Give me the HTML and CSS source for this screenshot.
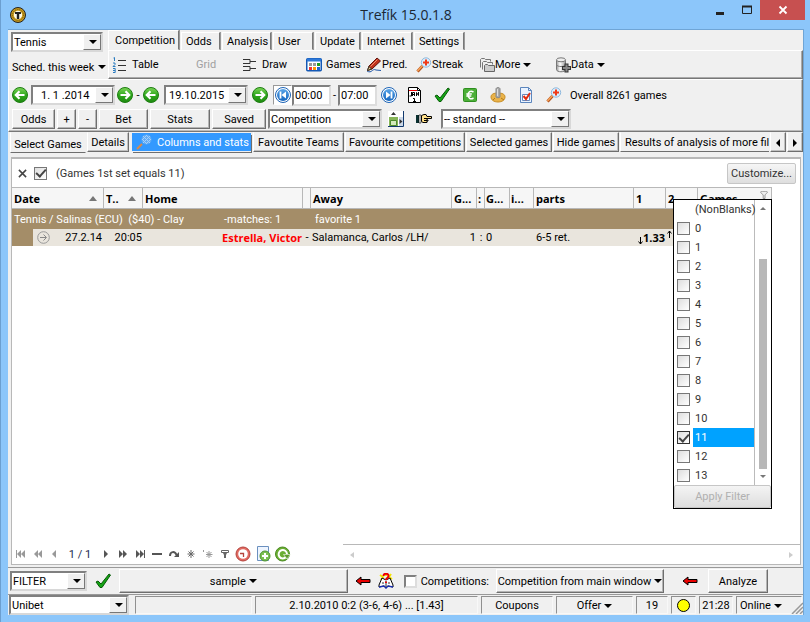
FILE: index.html
```html
<!DOCTYPE html>
<html lang="en">
<head>
<meta charset="utf-8">
<title>Trefík 15.0.1.8</title>
<link rel="stylesheet" href="styles.css">
</head>
<body>
<svg class="defs" aria-hidden="true">
  <defs>
    <linearGradient id="gGreen" x1="0" y1="0" x2="0" y2="1"><stop offset="0" stop-color="#7fd65a"/><stop offset=".5" stop-color="#2ea81c"/><stop offset="1" stop-color="#1f8a10"/></linearGradient>
    <linearGradient id="gBlue" x1="0" y1="0" x2="0" y2="1"><stop offset="0" stop-color="#5aa5e8"/><stop offset="1" stop-color="#1466c0"/></linearGradient>
    <linearGradient id="gGrey" x1="0" y1="0" x2="1" y2="0"><stop offset="0" stop-color="#999"/><stop offset=".4" stop-color="#fff"/><stop offset="1" stop-color="#999"/></linearGradient>
  </defs>
  <symbol id="go" viewBox="0 0 16 16"><circle cx="8" cy="8" r="7.5" fill="url(#gGreen)" stroke="#1d7d12"/><path d="M3.5 8h8M8.500 4.300L12.200 8l-3.700 3.700" fill="none" stroke="#fff" stroke-width="2.200"/></symbol>
  <symbol id="skip" viewBox="0 0 16 16"><circle cx="8" cy="8" r="7.500" fill="#fff" stroke="#1c63b5"/><circle cx="8" cy="8" r="6" fill="url(#gBlue)"/><path d="M5 4.500L9.500 8 5 11.500z" fill="#fff"/><path d="M10.500 4.500v7" stroke="#fff" stroke-width="1.800"/></symbol>
  <symbol id="check" viewBox="0 0 16 16"><path d="M1 9l2-1 3 3L14 1l1.500 1L7 14.500H5z" fill="#16a516" stroke="#075a07"/></symbol>
  <symbol id="lens" viewBox="0 0 16 16"><path d="M1.500 14.500L6.500 9" stroke="#b5521a" stroke-width="3"/><path d="M1.500 14L6.500 8.500" stroke="#f5a35a" stroke-width="1.500"/><circle cx="10" cy="5.500" r="4.700" fill="#d9efff" stroke="#8fb8dc"/><path d="M10 2.500v6M7 5.500h6" stroke="#f03a18" stroke-width="2"/></symbol>
  <symbol id="redarrow" viewBox="0 0 16 10"><path d="M1 5l5-4v2.500h9v3H6V9z" fill="#e80000" stroke="#000"/></symbol>
</svg>

<div class="window">
  <header class="titlebar">
    <svg class="app-icon" viewBox="0 0 16 16"><circle cx="8" cy="8" r="7.500" fill="#c79a1e" stroke="#222"/><circle cx="8" cy="8" r="5.500" fill="none" stroke="#6d520a" stroke-dasharray="1 1"/><circle cx="8" cy="8" r="4.200" fill="#fffbe8"/><path d="M5 5h6v2H9.200v5H6.800V7H5z" fill="#222"/></svg>
    <h1>Trefík 15.0.1.8</h1>
    <div class="window-buttons">
      <button aria-label="Minimize"><svg viewBox="0 0 10 10"><path d="M1 8.500h8" stroke="#222" stroke-width="3"/></svg></button>
      <button aria-label="Maximize"><svg viewBox="0 0 10 10"><path d="M0 1.500h10" stroke="#222" stroke-width="2"/><path d="M.5 1v7.500h9V1" fill="none" stroke="#222"/></svg></button>
      <button class="close" aria-label="Close"><svg viewBox="0 0 10 10"><path d="M1.500 1.500l7 7m0-7l-7 7" stroke="#fff" stroke-width="1.800"/></svg></button>
    </div>
  </header>

  <main class="client">
    <section class="top">
      <div class="sport">
        <span class="combo"><select aria-label="Sport"><option>Tennis</option></select></span>
        <button class="flat">Sched. this week<i class="caret"></i></button>
      </div>
      <div class="menu">
        <nav class="menu-tabs">
          <button class="on t-competition">Competition</button><button class="t-odds">Odds</button><button class="t-analysis">Analysis</button><button class="t-user">User</button><button class="t-update">Update</button><button class="t-internet">Internet</button><button class="t-settings">Settings</button>
        </nav>
        <div class="menu-bar">
          <button class="flat m-table"><svg class="i16" viewBox="0 0 16 16"><g fill="none" stroke="#2b7cc0"><path d="M1.500 1l1-.5V4M1 6h2v1.500L1 9.500h2.500M1 11.500h2.200v4H1m0-2h2"/></g><path d="M6 3.500h8M6 8.500h8M6 13.500h8" stroke="#333"/></svg>Table</button>
          <button class="flat m-grid" disabled>Grid</button>
          <button class="flat m-draw"><svg class="i16" viewBox="0 0 16 16"><path d="M1 2.500h7v4H1M8 4.500h6M1 9.500h7v4H1M8 11.500h6" fill="none" stroke="#333"/></svg>Draw</button>
          <button class="flat m-games"><svg class="i16" viewBox="0 0 16 16"><rect x=".75" y="1.750" width="14.500" height="12" rx="1" fill="#fff" stroke="#1459b5" stroke-width="1.500"/><path d="M1 3h14" stroke="#2d78d8" stroke-width="3"/><path d="M3 6h3v3H3zM7 6h3v3H7z" fill="#999"/><path d="M11 6h3v3h-3z" fill="#20a020"/><path d="M3 10h3v3H3z" fill="#e33"/><path d="M7 10h3v3H7z" fill="#f90"/><path d="M11 10h3v3h-3z" fill="#26c"/></svg>Games</button>
          <button class="flat tight m-pred"><svg class="i16" viewBox="0 0 16 16"><path d="M1 14c5 3 5-3 9-1l5 .5" fill="none" stroke="#2459a8"/><path d="M1.500 13.500L3 9l8-8 3.500 3-8.500 8z" fill="#c0301c" stroke="#5f130c"/><path d="M4.500 9.500l7-7" stroke="#f09070"/><path d="M1.500 13.500L3 9.500l2.500 2.500z" fill="#f1d09a" stroke="#332"/></svg>Pred.</button>
          <button class="flat tight m-streak"><svg class="i16"><use href="#lens"/></svg>Streak</button>
          <button class="flat tight m-more"><svg class="i16" viewBox="0 0 16 16"><path d="M1.500 10.500v-8l1-1h3l1 1h5v2" fill="#eee" stroke="#777"/><path d="M3.500 12.500v-7l1-1h3l1 1h5v2" fill="#eee" stroke="#777"/><path d="M5.500 14.500v-6l1-1h2l1 1h6v6z" fill="#ccc" stroke="#666"/></svg>More<i class="caret"></i></button>
          <button class="flat tight m-data"><svg class="i16" viewBox="0 0 16 16"><path d="M1.500 3v9.500c0 3 9 3 9 0V3" fill="url(#gGrey)" stroke="#777"/><ellipse cx="6" cy="2.800" rx="4.500" ry="2" fill="#eee" stroke="#777"/><path d="M1.500 8c1 2 8 2 9 0" fill="none" stroke="#777"/><path d="M11.500 6.500v9M7 11h9" stroke="#333" stroke-width="4"/><path d="M11.500 7.500v7M8 11h7" stroke="#888" stroke-width="2"/></svg>Data<i class="caret"></i></button>
        </div>
      </div>
    </section>

    <section class="filters">
      <div class="line dates">
        <button class="icon" aria-label="Previous start"><svg class="i16 flip"><use href="#go"/></svg></button>
        <span class="combo date"><input aria-label="From" value="1. 1 .2014"></span>
        <button class="icon" aria-label="Next start"><svg class="i16"><use href="#go"/></svg></button>
        <span class="dash">-</span>
        <button class="icon" aria-label="Previous end"><svg class="i16 flip"><use href="#go"/></svg></button>
        <span class="combo date date-to"><input aria-label="To" value="19.10.2015"></span>
        <button class="icon" aria-label="Next end"><svg class="i16"><use href="#go"/></svg></button>
        <button class="icon pressed" aria-label="Reset start time"><svg class="i16 flip"><use href="#skip"/></svg></button>
        <input class="time" aria-label="Start time" value="00:00">
        <span class="dash narrow">-</span>
        <input class="time" aria-label="End time" value="07:00">
        <button class="icon" aria-label="Last time"><svg class="i16"><use href="#skip"/></svg></button>
        <div class="tools">
          <button class="icon" aria-label="Calendar"><svg class="i16" viewBox="0 0 16 16"><path d="M2.500.5h9l3 3v12h-12z" fill="#fff" stroke="#000"/><path d="M11.500.5v3h3" fill="none" stroke="#000"/><path d="M3 3.500h8" stroke="#e00"/><path d="M5.500 5v4h-2M6.500 9V5.500h2V9M6.500 7.500h2M10.500 9V5.500l2 3V5" fill="none" stroke="#000"/><path d="M7 11.500h1.500V15M7 14.500h3" fill="none" stroke="#000"/></svg></button>
          <button class="icon" aria-label="Confirm"><svg class="i16"><use href="#check"/></svg></button>
          <button class="icon" aria-label="Currency"><svg class="i16" viewBox="0 0 16 16"><rect x="1.500" y="1.500" width="13" height="13" rx="1" fill="#4caf38" stroke="#2f8f20"/><path d="M11.500 5.200c-3-2.500-5.500 0-5.500 2.800s2.500 5.200 5.500 2.800M4.300 7h5.500M4.300 9h5" fill="none" stroke="#fff" stroke-width="1.500"/></svg></button>
          <button class="icon" aria-label="Joystick"><svg class="i16" viewBox="0 0 16 16"><path d="M1 10c0-3 3-4 7-4s7 1 7 4-3 5-7 5-7-2-7-5z" fill="#eab34a" stroke="#c88f28"/><path d="M3 13l2-2m6 0l3 2" stroke="#b57a18"/><path d="M6 2c0-2 4-2 4 0v8c0 1-4 1-4 0z" fill="#aaa" stroke="#888"/><path d="M7.500 2v7" stroke="#ddd"/></svg></button>
          <button class="icon" aria-label="Checklist"><svg class="i16" viewBox="0 0 16 16"><path d="M2.500.5h8l3 3v12h-11z" fill="#eaf3ff" stroke="#5c86bd"/><path d="M10.500.5v3h3" fill="none" stroke="#5c86bd"/><path d="M4.500 7.500h7v6h-7z" fill="#fff" stroke="#6688bb"/><path d="M5.500 9l2.500 3 4-6" fill="none" stroke="#e22c10" stroke-width="2"/></svg></button>
          <button class="icon" aria-label="Zoom"><svg class="i16"><use href="#lens"/></svg></button>
        </div>
        <span class="total">Overall 8261 games</span>
      </div>
      <div class="line actions">
        <button class="btn w-43">Odds</button><button class="btn w-19">+</button><button class="btn w-19">-</button><button class="btn w-49">Bet</button><button class="btn w-60">Stats</button><button class="btn w-54">Saved</button>
        <span class="combo scope"><select aria-label="Scope"><option>Competition</option></select></span>
        <button class="icon panel-icon" aria-label="Layout"><svg class="i16" viewBox="0 0 16 16"><path d="M0 0h16v16H0z" fill="#fff"/><path d="M15.500 0v15.500H0" fill="none" stroke="#123a6e"/><path d="M1 6h9v9H1z" fill="#86b558"/><path d="M2.500 9.500h6v5h-6z" fill="#d4eabc" stroke="#4f8a2e"/><path d="M11 6h4v9h-4z" fill="#cdd9e8"/><path d="M3 4l2.500-3L8 4zM11.500 8l3 2.500-3 2.500z" fill="#333"/></svg></button>
        <button class="icon" aria-label="Show"><svg class="i16" viewBox="0 0 16 16"><path d="M0 4h3v8H0z" fill="#0a3030"/><path d="M3 4h2v8H3z" fill="#fff" stroke="#000" stroke-width=".6"/><path d="M5.500 4.500L8 3.500h2l1 2h4.500v2H11v1.500h1v1h-1v1.500H7l-1.500-1z" fill="#ffe08a" stroke="#000"/><path d="M8 7.500h3M8 9.500h3" stroke="#000"/></svg></button>
        <span class="combo preset"><select aria-label="Preset"><option>-- standard --</option></select></span>
      </div>
    </section>

    <nav class="views">
      <button class="on">Select Games</button>
      <button class="w-42">Details</button>
      <button class="hot"><svg class="i16" viewBox="0 0 16 16"><path d="M1 15l5-5" stroke="#d98b4a" stroke-width="2"/><circle cx="10.500" cy="5.500" r="5" fill="#62acf5"/><path d="M7 2l7 7M6 5l5 5M10 1l5 5M14 2l-7 7M15 5l-5 5M11 1L6 6" stroke="#a6d0fa"/></svg>Columns and stats</button>
      <button class="w-91">Favoutite Teams</button>
      <button class="w-120">Favourite competitions</button>
      <button class="w-86">Selected games</button>
      <button class="w-66">Hide games</button>
      <button class="last">Results of analysis of more filters</button>
      <button class="scroll" aria-label="Scroll left"><i class="tri left"></i></button>
      <button class="scroll" aria-label="Scroll right"><i class="tri right"></i></button>
    </nav>

    <section class="grid">
      <div class="grid-filter">
        <button class="icon clear" aria-label="Clear filter"><svg viewBox="0 0 10 10"><path d="M1 1l8 8m0-8L1 9" stroke="#444" stroke-width="1.700"/></svg></button>
        <input type="checkbox" id="useFilter" class="tick" checked>
        <label for="useFilter">(Games 1st set equals 11)</label>
        <button class="customize">Customize...</button>
      </div>
      <table>
        <colgroup><col class="c-indent"><col class="c-date"><col class="c-time"><col class="c-home"><col class="c-dash"><col class="c-away"><col class="c-g"><col class="c-colon"><col class="c-g2"><col class="c-info"><col class="c-parts"><col class="c-odd"><col class="c-odd"><col class="c-games"></colgroup>
        <thead>
          <tr>
            <th colspan="2"><span class="sorted">Date<i class="tri up"></i></span></th>
            <th><span class="sorted">T..<i class="tri up"></i></span></th>
            <th>Home</th><th></th><th>Away</th><th>G...</th><th class="nopad">:</th><th class="nopad">G...</th><th class="nopad">i...</th><th>parts</th><th>1</th><th>2</th>
            <th class="anchor">Games<svg class="funnel" viewBox="0 0 8 8"><path d="M.5 1c0-1 7-1 7 0S5 3.500 5 4v3.500H3.200V4C3.200 3.500.5 2 .5 1z" fill="#eee" stroke="#999"/></svg>
              <div class="popup">
                <div class="popup-body">
                  <div class="options">
                    <label class="blank">(NonBlanks)</label>
                    <label><input type="checkbox" class="tick"><span>0</span></label>
                    <label><input type="checkbox" class="tick"><span>1</span></label>
                    <label><input type="checkbox" class="tick"><span>2</span></label>
                    <label><input type="checkbox" class="tick"><span>3</span></label>
                    <label><input type="checkbox" class="tick"><span>4</span></label>
                    <label><input type="checkbox" class="tick"><span>5</span></label>
                    <label><input type="checkbox" class="tick"><span>6</span></label>
                    <label><input type="checkbox" class="tick"><span>7</span></label>
                    <label><input type="checkbox" class="tick"><span>8</span></label>
                    <label><input type="checkbox" class="tick"><span>9</span></label>
                    <label><input type="checkbox" class="tick"><span>10</span></label>
                    <label class="selected"><input type="checkbox" class="tick" checked><span>11</span></label>
                    <label><input type="checkbox" class="tick"><span>12</span></label>
                    <label><input type="checkbox" class="tick"><span>13</span></label>
                  </div>
                  <div class="bar"><i class="tri up small"></i><div class="thumb"></div><i class="tri down small"></i></div>
                </div>
                <button class="apply" disabled>Apply Filter</button>
              </div>
            </th>
          </tr>
        </thead>
        <tbody>
          <tr class="group"><td colspan="14"><div class="group-line"><span>Tennis / Salinas (ECU)  ($40) - Clay</span><span>-matches: 1</span><span>favorite 1</span></div></td></tr>
          <tr class="match">
            <td class="indent"></td>
            <td><span class="match-date"><svg viewBox="0 0 13 13"><circle cx="6.500" cy="6.500" r="5.800" fill="none" stroke="#999"/><path d="M3 6.500h6M6.500 3.500l3 3-3 3" fill="none" stroke="#888"/></svg>27.2.14</span></td>
            <td class="r">20:05</td><td class="r winner">Estrella, Victor</td><td class="mid">-</td><td class="nopad">Salamanca, Carlos /LH/</td><td class="r">1</td><td class="mid">:</td><td class="nopad">0</td><td></td><td>6-5 ret.</td>
            <td class="r odd"><svg viewBox="0 0 5 8"><path d="M2.500 0v7M.5 4.500l2 2.500 2-2.500" fill="none" stroke="#000"/></svg>1.33</td>
            <td class="nopad rise"><svg viewBox="0 0 5 8"><path d="M2.500 8V1M.5 3.500l2-2.500 2 2.500" fill="none" stroke="#000"/></svg></td><td></td>
          </tr>
        </tbody>
      </table>
      <div class="space"></div>
      <footer class="pager">
        <div class="nav">
          <button aria-label="First" disabled><svg viewBox="0 0 10 8"><path d="M.5 0v8" stroke="#999"/><path d="M5 0v8L1 4zM9 0v8L5 4z" fill="#999"/></svg></button>
          <button aria-label="Page back" disabled><svg viewBox="0 0 10 8"><path d="M5 0v8L1 4zM9 0v8L5 4z" fill="#999"/></svg></button>
          <button aria-label="Back" disabled><svg viewBox="0 0 10 8"><path d="M6 0v8L2 4z" fill="#999"/></svg></button>
          <span>1 / 1</span>
          <button aria-label="Next"><svg viewBox="0 0 10 8"><path d="M3 0v8l4-4z" fill="#555"/></svg></button>
          <button aria-label="Page next"><svg viewBox="0 0 10 8"><path d="M1 0v8l4-4zM5 0v8l4-4z" fill="#555"/></svg></button>
          <button aria-label="Last"><svg viewBox="0 0 10 8"><path d="M1 0v8l4-4zM5 0v8l4-4z" fill="#555"/><path d="M9.500 0v8" stroke="#555"/></svg></button>
          <button aria-label="Delete"><svg viewBox="0 0 10 8"><path d="M0 4h10" stroke="#555" stroke-width="2"/></svg></button>
          <button aria-label="Redo"><svg viewBox="0 0 10 8"><path d="M1 6C1 1 6 1 7.500 5" fill="none" stroke="#555" stroke-width="2"/><path d="M10 2v5H5z" fill="#555"/></svg></button>
          <button aria-label="Bookmark"><svg viewBox="0 0 10 8"><path d="M5 0v8M1.500 4h7M2.500 1.500l5 5m0-5l-5 5" stroke="#666"/></svg></button>
          <button aria-label="Go to bookmark"><svg viewBox="0 0 10 8"><path d="M6 1v7M3 4.500h6.500M3.500 2l5 5m0-5l-5 5M.5 0v2" stroke="#999"/></svg></button>
          <button aria-label="Filter"><svg viewBox="0 0 10 8"><path d="M1.500.5h7v2h-7z" fill="#fff" stroke="#666"/><path d="M3 3h4L6 5v3H4V5z" fill="#666"/></svg></button>
          <button class="big" aria-label="Clock"><svg viewBox="0 0 16 16"><circle cx="8" cy="8" r="7" fill="#e06a62" stroke="#b5433c"/><circle cx="8" cy="8" r="4.800" fill="#fff"/><path d="M8.500 11V7.500H5" fill="none" stroke="#b5433c" stroke-width="1.300"/></svg></button>
          <button class="big" aria-label="Add page"><svg viewBox="0 0 16 16"><path d="M2.500.5h11v14h-11z" fill="#eef5ff" stroke="#6b90bf"/><circle cx="10" cy="10" r="5" fill="#7cbf52" stroke="#4f9430"/><path d="M10 7v6M7 10h6" stroke="#fff" stroke-width="2"/></svg></button>
          <button class="big" aria-label="Refresh"><svg viewBox="0 0 16 16"><circle cx="7.500" cy="8" r="7" fill="#6aae33" stroke="#4a8a20"/><path d="M11 11a4.200 4.200 0 1 1 1-3" fill="none" stroke="#fff" stroke-width="2"/><path d="M8.500 8.500h7L12 13z" fill="#5c9a2a" stroke="#fff" stroke-width=".6"/></svg></button>
        </div>
        <div class="hscroll"><i class="tri left small"></i><i class="tri right small"></i></div>
      </footer>
    </section>

    <section class="bottom">
      <span class="combo filter"><select aria-label="Filter"><option>FILTER</option></select></span>
      <button class="icon ok" aria-label="Apply"><svg class="i16"><use href="#check"/></svg></button>
      <button class="btn sample">sample<i class="caret"></i></button>
      <button class="icon" aria-label="Previous"><svg class="i16"><use href="#redarrow"/></svg></button>
      <button class="icon help" aria-label="Help"><svg class="i16" viewBox="0 0 16 16"><path d="M2 2l3 2-2 3M13 1l-2 3 3 2M8 0v3" stroke="#f5e400" stroke-width="2" fill="none"/><path d="M1 12l3-7 4 2 4-2 3 7v2l-5-1-2 2-2-2-5 1z" fill="#fff" stroke="#000"/><path d="M1 14l5-1 2 2 2-2 5 1" fill="none" stroke="#1a2fb0" stroke-width="1.500"/><path d="M4 10h2m4 0h2M8 8v6" stroke="#333"/><path d="M5.500 3c0-3 5-3 5 0 0 2-2.500 2-2.500 4M8 8.500V10" fill="none" stroke="#e00" stroke-width="2"/></svg></button>
      <input type="checkbox" id="comps" class="sunken"><label for="comps">Competitions:</label>
      <button class="btn from">Competition from main window<i class="caret"></i></button>
      <button class="icon second" aria-label="Back to analysis"><svg class="i16"><use href="#redarrow"/></svg></button>
      <button class="btn w-60">Analyze</button>
    </section>

    <footer class="status">
      <span class="combo bookmaker"><select aria-label="Bookmaker"><option>Unibet</option></select></span>
      <span class="cell s-empty"></span>
      <span class="cell s-result">2.10.2010 0:2 (3-6, 4-6) ... [1.43]</span>
      <span class="cell s-coupons">Coupons</span>
      <button class="cell s-offer">Offer<i class="caret"></i></button>
      <span class="cell s-num">19</span>
      <span class="cell s-dot"><i></i></span>
      <span class="cell s-clock">21:28</span>
      <button class="cell s-online">Online<i class="caret"></i></button>
      <svg class="grip" viewBox="0 0 12 12"><path d="M1 12L12 1M5 12l7-7M9 12l3-3" stroke="#999" stroke-width="1.500"/></svg>
    </footer>
  </main>
</div>
</body>
</html>
```

FILE: styles.css
```css
* { box-sizing: border-box; }
body {
  margin: 0;
  font: 11px/15px Roboto, "Noto Sans", sans-serif;
  color: #000;
}
button, input, select { font: inherit; color: inherit; margin: 0; border-radius: 0; }
button { padding: 0; border: 0; background: none; white-space: nowrap; }
.defs { position: absolute; width: 0; height: 0; }
.i16 { width: 16px; height: 16px; flex: none; display: block; }
.flip { transform: scaleX(-1); }

.window {
  display: flex;
  flex-direction: column;
  height: 100vh;
  padding: 0 6px 7px 7px;
  background: #8cc6fa;
  border-left: 1px solid #6c9fd0;
}
.titlebar { display: flex; align-items: center; height: 29px; flex: none; position: relative; }
.titlebar h1 { flex: 1; margin: 0 18px 0 0; text-align: center; font: 14px/20px "Open Sans", sans-serif; color: #1b2733; }
.app-icon { width: 16px; height: 16px; margin-left: 2px; }
.window-buttons { display: flex; height: 20px; position: absolute; top: 0; right: -1px; }
.window-buttons button { width: 27px; display: grid; place-items: center; }
.window-buttons svg { width: 10px; height: 10px; }
.window-buttons .close { width: 45px; background: #c75050; }

.client {
  flex: 1;
  min-height: 0;
  display: flex;
  flex-direction: column;
  background: #f0f0f0;
  border: 1px solid #6fa5d6;
  border-left: 0;
  border-bottom: 0;
}

/* shared controls */
.caret { display: inline-block; border: 4px solid transparent; border-top-color: #000; border-bottom: 0; margin-left: 3px; vertical-align: 2px; }
.tri { display: inline-block; width: 0; height: 0; border: 4px solid transparent; }
.tri.left { border-right-color: #000; border-left: 0; }
.tri.right { border-left-color: #000; border-right: 0; }
.tri.up { border-bottom: 5px solid #777; border-top: 0; }
.tri.down { border-top: 4px solid #777; border-bottom: 0; }
.tri.small { border-width: 3px; }
.tri.small.up { border-top: 0; border-bottom: 3px solid #777; }
.tri.small.down { border-bottom: 0; border-top: 3px solid #777; }
.tri.small.left { border-left: 0; border-right: 4px solid #ccc; }
.tri.small.right { border-right: 0; border-left: 4px solid #ccc; }

.combo { position: relative; display: block; height: 20px; flex: none; }
.combo select, .combo input {
  appearance: none;
  width: 100%;
  height: 100%;
  padding: 1px 20px 0 1px;
  background: #fff;
  border: 2px solid;
  border-color: #808080 #d8d8d8 #d8d8d8 #808080;
  outline: 0;
}
.combo::before {
  content: "";
  position: absolute;
  top: 2px;
  right: 2px;
  bottom: 2px;
  width: 16px;
  background: #f0f0f0;
  border: 1px solid;
  border-color: #fff #777 #777 #fff;
  pointer-events: none;
}
.combo::after {
  content: "";
  position: absolute;
  top: 8px;
  right: 6px;
  border: 4px solid transparent;
  border-top-color: #000;
  border-bottom: 0;
  pointer-events: none;
}
.btn {
  height: 21px;
  flex: none;
  padding-top: 1px;
  background: #f0f0f0;
  border: 1px solid;
  border-color: #fff #6e6e6e #6e6e6e #fff;
  box-shadow: inset -1px -1px #b4b4b4;
}
.icon { flex: none; width: 16px; display: grid; place-items: center; }
.flat { display: flex; align-items: center; gap: 4px; flex: none; }
.flat .caret { margin-left: 0; }
.flat.tight { gap: 0; }
.flat.tight .caret { margin-left: 3px; }
.flat:disabled { color: #a0a0a0; }
.w-19 { width: 19px; }
.w-42 { width: 42px; }
.w-43 { width: 43px; }
.w-49 { width: 49px; }
.w-54 { width: 54px; }
.w-60 { width: 60px; }
.w-66 { width: 66px; }
.w-86 { width: 86px; }
.w-91 { width: 91px; }
.w-120 { width: 120px; }

/* sport picker and main menu */
.top { display: flex; height: 49px; flex: none; }
.sport { width: 100px; flex: none; padding: 2px 5px 0 3px; }
.sport .flat { height: 30px; margin-left: 1px; }
.menu { flex: 1; min-width: 0; display: flex; flex-direction: column; }
.menu-tabs { display: flex; align-items: flex-end; height: 20px; gap: 2px; }
.menu-tabs button {
  height: 18px;
  text-align: left;
  padding: 1px 0 0 4px;
  border: 1px solid;
  border-color: #fff #777 transparent #fff;
  box-shadow: 1px 0 #999;
}
.menu-tabs .on { height: 20px; padding: 0 0 0 6px; }
.t-competition { width: 71px; }
.t-odds { width: 39px; }
.t-analysis { width: 49px; }
.t-user { width: 40px; }
.t-update { width: 45px; }
.t-internet { width: 50px; }
.t-settings { width: 50px; }
.menu-bar {
  flex: 1;
  display: flex;
  align-items: center;
  padding-left: 3px;
  border: 1px solid;
  border-color: #fff #777 #777 #fff;
  box-shadow: inset -1px -1px #aaa;
}
.m-table { width: 84px; }
.m-grid { width: 46px; }
.m-draw { width: 64px; }
.m-games { width: 60px; }
.m-pred { width: 50px; }
.m-streak { width: 63px; }
.m-more { width: 76px; }

/* filters */
.filters {
  flex: none;
  display: flex;
  flex-direction: column;
  height: 53px;
  padding: 3px 0 0 3px;
  border: 1px solid;
  border-color: #fff #777 #777 #fff;
  box-shadow: inset -1px -1px #bbb;
}
.line { display: flex; align-items: center; flex: none; }
.dates { height: 24px; margin-bottom: 1px; }
.date { width: 84px; margin: 0 2px 0 3px; }
.date-to { margin: 0 4px 0 5px; }
.date input { padding-left: 8px; }
.date-to input { padding-left: 3px; }
.dash { width: 10px; text-align: center; flex: none; }
.dash.narrow { width: 7px; }
.pressed { width: 19px; height: 20px; margin-left: 5px; background: #fff; border: 1px solid; border-color: #999 #fff #fff #999; }
.time { width: 39px; height: 21px; padding: 1px 0 0 1px; border: 2px solid; border-color: #808080 #ddd #ddd #808080; background: #fff; flex: none; }
.time + .icon { margin-left: 4px; }
.tools { display: flex; gap: 12px; margin-left: 9px; flex: none; }
.total { margin-left: 8px; white-space: nowrap; }
.actions { gap: 2px; height: 22px; }
.actions .btn { height: 20px; }
.scope { width: 114px; }
.preset { width: 130px; margin-left: 7px; }
.panel-icon { margin: 0 10px 0 4px; }

/* view tabs */
.views { display: flex; height: 22px; flex: none; padding-left: 2px; gap: 1px; margin-bottom: 3px; }
.views button {
  flex: none;
  height: 20px;
  padding-top: 1px;
  border: 1px solid;
  border-color: transparent #6e6e6e #6e6e6e #fff;
  box-shadow: inset -1px -1px #c0c0c0;
}
.views .on { width: 76px; height: 21px; padding-top: 3px; border-right-color: transparent; box-shadow: none; }
.views .hot { display: flex; align-items: center; gap: 5px; width: 119px; height: 18px; margin: 1px 1px 0 2px; padding: 0 0 0 4px; background: #3399ff; color: #fff; border: 0; box-shadow: 0 1px #f0f0f0, 1px 2px #6e6e6e; }
.views .last { flex: 1; min-width: 0; overflow: hidden; text-align: left; padding-left: 4px; border-right: 0; box-shadow: none; }
.views .scroll { width: 16px; display: grid; place-items: center; }

/* data grid */
.grid {
  flex: 1;
  min-height: 0;
  display: flex;
  flex-direction: column;
  margin: 0 2px 2px 3px;
  background: #fff;
  border: 1px solid #b8b8b8;
  border-top-width: 2px;
}
.grid-filter { display: flex; align-items: center; height: 28px; flex: none; padding: 0 4px 0 6px; color: #333; }
.clear { width: 9px; }
.clear svg { width: 9px; height: 9px; }
.tick {
  appearance: none;
  flex: none;
  width: 13px;
  height: 13px;
  border: 1px solid #777;
  background: linear-gradient(135deg, #dedede, #fff);
  display: grid;
  place-items: center;
}
.tick:checked::after { content: ""; width: 4px; height: 8px; border: solid #444; border-width: 0 2px 2px 0; transform: translateY(-1px) rotate(42deg); }
.grid-filter .tick { margin: 0 9px 0 7px; }
.customize { margin-left: auto; width: 69px; height: 21px; border: 1px solid #c6c6c6; border-radius: 2px; background: linear-gradient(#f6f6f6, #dedede); }

table { table-layout: fixed; border-collapse: separate; border-spacing: 0; width: 760px; flex: none; }
.c-indent { width: 21px; }
.c-date { width: 71px; }
.c-time { width: 39px; }
.c-home { width: 160px; }
.c-dash { width: 8px; }
.c-away { width: 141px; }
.c-g { width: 25px; }
.c-colon { width: 8px; }
.c-g2 { width: 25px; }
.c-info { width: 24px; }
.c-parts { width: 100px; }
.c-odd { width: 32px; }
th {
  height: 22px;
  padding: 0 2px;
  text-align: left;
  font-family: "Open Sans", sans-serif;
  font-weight: bold;
  white-space: nowrap;
  background: #f6f6f6;
  border: solid #b8b8b8;
  border-width: 1px 1px 1px 0;
}
td { padding: 0 2px; white-space: nowrap; }
.nopad { padding: 0 1px; }
.sorted { display: flex; justify-content: space-between; align-items: center; padding-right: 4px; }
.group td { height: 20px; padding: 0 2px; background: #a48d68; color: #fff; }
.group-line { display: grid; grid-template-columns: 210px 91px 1fr; white-space: pre; }
.match td { height: 17px; background: #e9e5dd; }
.match .indent { background: #a48d68; }
.match-date { display: flex; justify-content: space-between; align-items: center; padding-left: 2px; }
.match-date svg { width: 13px; height: 13px; }
.match .r { text-align: right; padding-right: 1px; }
.match .mid { text-align: center; padding: 0; }
.match .winner { color: #f00; font-family: "Open Sans", sans-serif; font-weight: bold; }
.match .odd { font-family: "Open Sans", sans-serif; font-weight: bold; padding: 0 1px 0 0; }
.odd svg, .rise svg { width: 5px; height: 8px; }
.odd svg { vertical-align: -3px; }
.rise svg { vertical-align: 3px; }

.anchor { position: relative; }
.funnel { position: absolute; top: 3px; right: 3px; width: 8px; height: 8px; }
.popup { position: absolute; top: 11px; right: -1px; width: 99px; z-index: 2; border: 1px solid #000; background: #fff; font-family: Roboto, sans-serif; font-weight: normal; color: #333; }
.popup-body { display: flex; }
.options { flex: 1; min-width: 0; border-right: 1px solid #bbb; }
.options label { display: flex; align-items: center; height: 19px; padding-left: 3px; gap: 3px; }
.options span { flex: 1; line-height: 18px; padding: 1px 0 0 2px; }
.options .blank { padding-left: 21px; }
.options .selected span { background: #00a2ff; color: #fff; }
.options .selected .tick { border-color: #333; }
.bar { flex: none; width: 16px; display: flex; flex-direction: column; align-items: center; padding: 7px 0; }
.thumb { flex: 1; width: 8px; margin: 49px 0 6px; background: #b8b8b8; }
.apply { display: block; width: 100%; height: 23px; border: 1px solid #c6c6c6; border-radius: 2px; background: linear-gradient(#f4f4f4, #dedede); color: #b0b0b0; }

.space { flex: 1; }
.pager { display: flex; align-items: stretch; height: 20px; flex: none; }
.nav { width: 331px; display: flex; align-items: center; }
.nav button { width: 17px; display: grid; place-items: center; }
.nav svg { width: 10px; height: 8px; }
.nav span { width: 34px; text-align: center; color: #1c2c50; }
.nav .big { width: 20px; }
.nav .big svg { width: 16px; height: 16px; }
.hscroll { flex: 1; border-top: 1px solid #b8b8b8; display: flex; align-items: center; justify-content: space-between; padding: 0 7px; }

/* bottom toolbar */
.bottom {
  display: flex;
  align-items: center;
  flex: none;
  height: 28px;
  padding-left: 2px;
  border-top: 1px solid #999;
  border-bottom: 1px solid #999;
}
.filter { width: 77px; }
.ok { margin: 0 8px; }
.bottom .btn { height: 24px; }
.bottom .btn.sample { flex: 1; margin-right: 7px; }
.help { margin: 0 10px 0 7px; }
.sunken { appearance: none; width: 13px; height: 13px; flex: none; background: #fff; border: 2px solid; border-color: #808080 #ddd #ddd #808080; margin-right: 4px; }
.from { width: 168px; margin-left: 7px; }
.second { margin: 0 10px 0 18px; }
.bottom .w-60 { margin-right: 35px; }

/* status bar */
.status { display: flex; align-items: center; gap: 3px; flex: none; height: 20px; padding: 0 1px 0 1px; position: relative; }
.bookmaker { width: 120px; margin-right: 3px; }
.cell { flex: none; height: 18px; padding-top: 1px; display: flex; align-items: center; justify-content: center; border: 1px solid; border-color: #909090 #f8f8f8 #f8f8f8 #909090; }
.s-empty { width: 117px; }
.s-result { flex: 1; }
.s-coupons { width: 72px; }
.s-offer { width: 77px; }
.s-num { width: 32px; }
.s-dot { width: 25px; }
.s-dot i { width: 13px; height: 13px; border-radius: 50%; background: #ff0; border: 1px solid #000; }
.s-clock { width: 34px; }
.s-online { width: 66px; justify-content: flex-start; padding-left: 3px; }
.grip { position: absolute; right: 0; bottom: 1px; width: 12px; height: 12px; }
```
